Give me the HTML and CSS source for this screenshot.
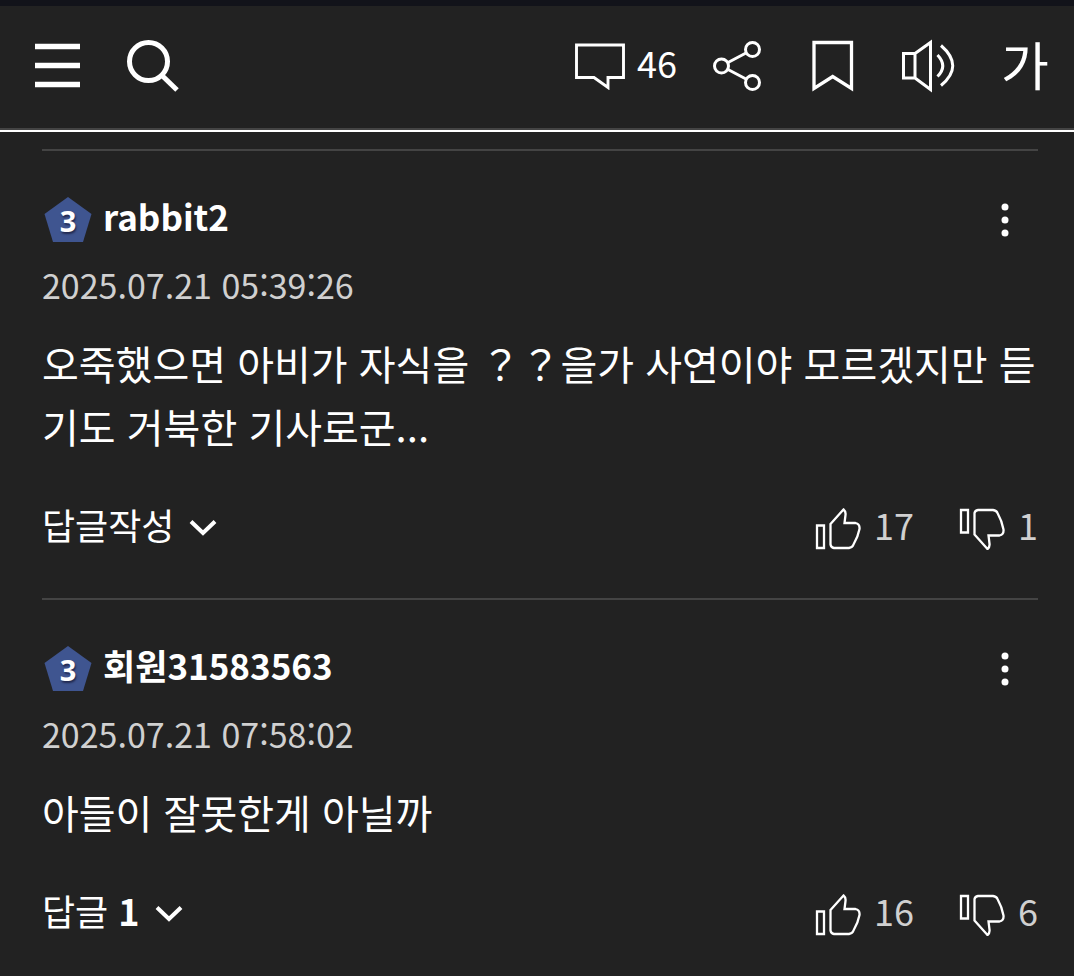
FILE: index.html
```html
<!DOCTYPE html>
<html lang="ko">
<head>
    <meta charset="UTF-8">
    <meta name="viewport" content="width=device-width, initial-scale=1.0">
    <title>댓글</title>
    <link rel="stylesheet" href="styles.css">
</head>
<body>
    <!-- 아이콘 모음 -->
    <svg class="symbols" aria-hidden="true">
        <symbol id="badge" viewBox="0 0 48 46">
            <path d="M24 0 47.500 17 39 45H9L0.500 17Z" fill="#3f5590"/>
        </symbol>
        <symbol id="chevron" viewBox="0 0 28 18">
            <path d="M2 2.500 14 14 26 2.500" fill="none" stroke="#fff" stroke-width="4"/>
        </symbol>
        <symbol id="dots" viewBox="0 0 8 34">
            <circle cx="4" cy="4" r="3.500" fill="#fff"/>
            <circle cx="4" cy="17" r="3.500" fill="#fff"/>
            <circle cx="4" cy="30" r="3.500" fill="#fff"/>
        </symbol>
        <symbol id="like" viewBox="0 0 46 44">
            <g fill="none" stroke="#fff" stroke-width="2.300">
                <path d="M2 19.500H9V42H2Z"/>
                <path d="M15.500 18 28.500 3.500Q31 5.500 30.500 9L29.500 17H40.500Q45 18 44.500 23Q43 31 38.500 38.500Q37.500 41.500 34 42H19Q16 41.500 15.500 38.500Z"/>
            </g>
        </symbol>
        <symbol id="dislike" viewBox="0 0 46 44">
            <g fill="none" stroke="#fff" stroke-width="2.300">
                <path d="M2 4H9V26.500H2Z"/>
                <path d="M15.500 28.500 28.500 43Q31 41 30.500 37.500L29.500 29.500H40.500Q45 28.500 44.500 23.500Q43 15 38.500 7Q37.500 4.500 34 4H19Q16 4.500 15.500 7Z"/>
            </g>
        </symbol>
    </svg>

    <header class="header">
        <nav class="group">
            <button class="icon-btn" type="button" aria-label="메뉴">
                <svg width="46" height="46" viewBox="0 0 46 46"><path d="M1 3.500H46M1 22.500H46M1 41.500H46" stroke="#fff" stroke-width="5.500"/></svg>
            </button>
            <button class="icon-btn" type="button" aria-label="검색">
                <svg width="52" height="54" viewBox="0 0 52 54"><g fill="none" stroke="#fff" stroke-width="5"><circle cx="21.500" cy="22.500" r="19"/><path d="M35 36.500 50 51"/></g></svg>
            </button>
        </nav>
        <div class="group">
            <a class="comment-link" href="#comments">
                <svg width="50" height="48" viewBox="0 0 50 48"><path d="M1.500 3H48.500V35.500H33V45.500L19 35.500H1.500Z" fill="none" stroke="#fff" stroke-width="2.900"/></svg>
                <span class="label">46</span>
            </a>
            <button class="icon-btn" type="button" aria-label="공유">
                <svg width="48" height="50" viewBox="0 0 48 50"><g fill="none" stroke="#fff" stroke-width="3"><circle cx="8.500" cy="25" r="7"/><circle cx="39.500" cy="8.500" r="7"/><circle cx="39.500" cy="41.500" r="7"/><path d="M15 21.500 33 12M15 28.500 33 38"/></g></svg>
            </button>
            <button class="icon-btn" type="button" aria-label="스크랩">
                <svg width="42" height="52" viewBox="0 0 42 52"><path d="M2 2.500H39.500V48.500L20.700 36.500 2 48.500Z" fill="none" stroke="#fff" stroke-width="3.300"/></svg>
            </button>
            <button class="icon-btn" type="button" aria-label="듣기">
                <svg width="54" height="54" viewBox="0 0 54 54"><g fill="none" stroke="#fff" stroke-width="3"><path d="M1.500 14.500H13V39H1.500ZM13 14.500 28.500 3.500V50.500L13 39"/><path d="M35.500 16Q46 27 35.500 37.500M39 6.500Q62.500 27 39 46.500"/></g></svg>
            </button>
            <button class="icon-btn font-btn" type="button" aria-label="글자 크기">가</button>
        </div>
    </header>

    <main class="comments" id="comments">
        <article class="comment">
            <div class="comment-head">
                <span class="level"><svg class="level-bg"><use href="#badge"/></svg><b class="level-num">3</b></span>
                <strong class="name label">rabbit2</strong>
                <button class="more" type="button" aria-label="더보기"><svg width="8" height="34"><use href="#dots"/></svg></button>
            </div>
            <time class="date" datetime="2025-07-21T05:39:26">2025.07.21 05:39:26</time>
            <p class="text">오죽했으면 아비가 자식을 ？？을가 사연이야 모르겠지만 듣기도 거북한 기사로군...</p>
            <div class="actions">
                <button class="reply" type="button"><span class="label">답글작성</span> <svg width="28" height="18"><use href="#chevron"/></svg></button>
                <div class="votes">
                    <button class="vote" type="button" aria-label="추천 17"><svg width="46" height="44"><use href="#like"/></svg><span class="label">17</span></button>
                    <button class="vote" type="button" aria-label="비추천 1"><svg width="46" height="44"><use href="#dislike"/></svg><span class="label">1</span></button>
                </div>
            </div>
        </article>

        <article class="comment">
            <div class="comment-head">
                <span class="level"><svg class="level-bg"><use href="#badge"/></svg><b class="level-num">3</b></span>
                <strong class="name label">회원31583563</strong>
                <button class="more" type="button" aria-label="더보기"><svg width="8" height="34"><use href="#dots"/></svg></button>
            </div>
            <time class="date" datetime="2025-07-21T07:58:02">2025.07.21 07:58:02</time>
            <p class="text">아들이 잘못한게 아닐까</p>
            <div class="actions">
                <button class="reply" type="button"><span class="label">답글 <b>1</b></span> <svg width="28" height="18"><use href="#chevron"/></svg></button>
                <div class="votes">
                    <button class="vote" type="button" aria-label="추천 16"><svg width="46" height="44"><use href="#like"/></svg><span class="label">16</span></button>
                    <button class="vote" type="button" aria-label="비추천 6"><svg width="46" height="44"><use href="#dislike"/></svg><span class="label">6</span></button>
                </div>
            </div>
        </article>
    </main>
</body>
</html>
```
FILE: styles.css
```css
* {
    box-sizing: border-box;
}
body {
    margin: 0;
    background-color: #222222;
    color: #ffffff;
    font-family: "Noto Sans CJK KR", sans-serif;
}
button {
    padding: 0;
    border: 0;
    background: none;
    color: inherit;
    font-family: inherit;
    cursor: pointer;
}
svg {
    display: block;
    flex: none;
}
.symbols {
    display: none;
}
.label {
    padding-bottom: 8px;
}

/* 상단 바 */
.header {
    display: flex;
    justify-content: space-between;
    height: 132px;
    padding: 0 13px 4px 21px;
    border-top: 6px solid #12131a;
    border-bottom: 2px solid #ffffff;
    box-shadow: inset 0 -2px #444444;
}
.group {
    display: flex;
    align-items: center;
    gap: 24px;
}
.icon-btn {
    display: flex;
    align-items: center;
    justify-content: center;
    width: 72px;
    height: 72px;
}
.comment-link {
    display: flex;
    align-items: center;
    gap: 12px;
    color: #ffffff;
    font-size: 36px;
    line-height: 48px;
    text-decoration: none;
}
.font-btn {
    padding-bottom: 4px;
    font-size: 52px;
    line-height: 68px;
}

/* 댓글 목록 */
.comments {
    padding: 17px 36px 0 42px;
}
.comment {
    padding: 45px 0 46px;
    border-top: 2px solid #444444;
}
.comment:last-child {
    padding-bottom: 24px;
}
.comment-head {
    display: flex;
    align-items: center;
    height: 48px;
}
.level {
    display: grid;
    place-items: center;
    width: 48px;
    height: 46px;
    margin: 0 11px 0 2px;
}
.level-bg,
.level-num {
    grid-area: 1 / 1;
}
.level-bg {
    width: 48px;
    height: 46px;
}
.level-num {
    padding-top: 2px;
    font-family: "Open Sans", sans-serif;
    font-size: 29px;
    line-height: 40px;
    text-shadow: 1px 2px 2px #222a50;
}
.name {
    font-size: 35px;
    line-height: 48px;
}
.more {
    display: flex;
    align-items: center;
    justify-content: center;
    width: 48px;
    height: 48px;
    margin-left: auto;
    margin-right: 9px;
}
.date {
    display: block;
    margin-top: 17px;
    color: #d0d0d0;
    font-size: 34px;
    line-height: 48px;
}
.text {
    margin: 23px 0 46px;
    font-size: 40px;
    line-height: 63px;
    word-break: break-all;
}
.actions,
.votes,
.reply,
.vote {
    display: flex;
    align-items: center;
}
.actions {
    justify-content: space-between;
    height: 48px;
}
.reply {
    gap: 15px;
    font-size: 36px;
    line-height: 48px;
}
.votes {
    gap: 45px;
}
.vote {
    gap: 13px;
    color: #d0d0d0;
    font-size: 36px;
    line-height: 48px;
}
```
